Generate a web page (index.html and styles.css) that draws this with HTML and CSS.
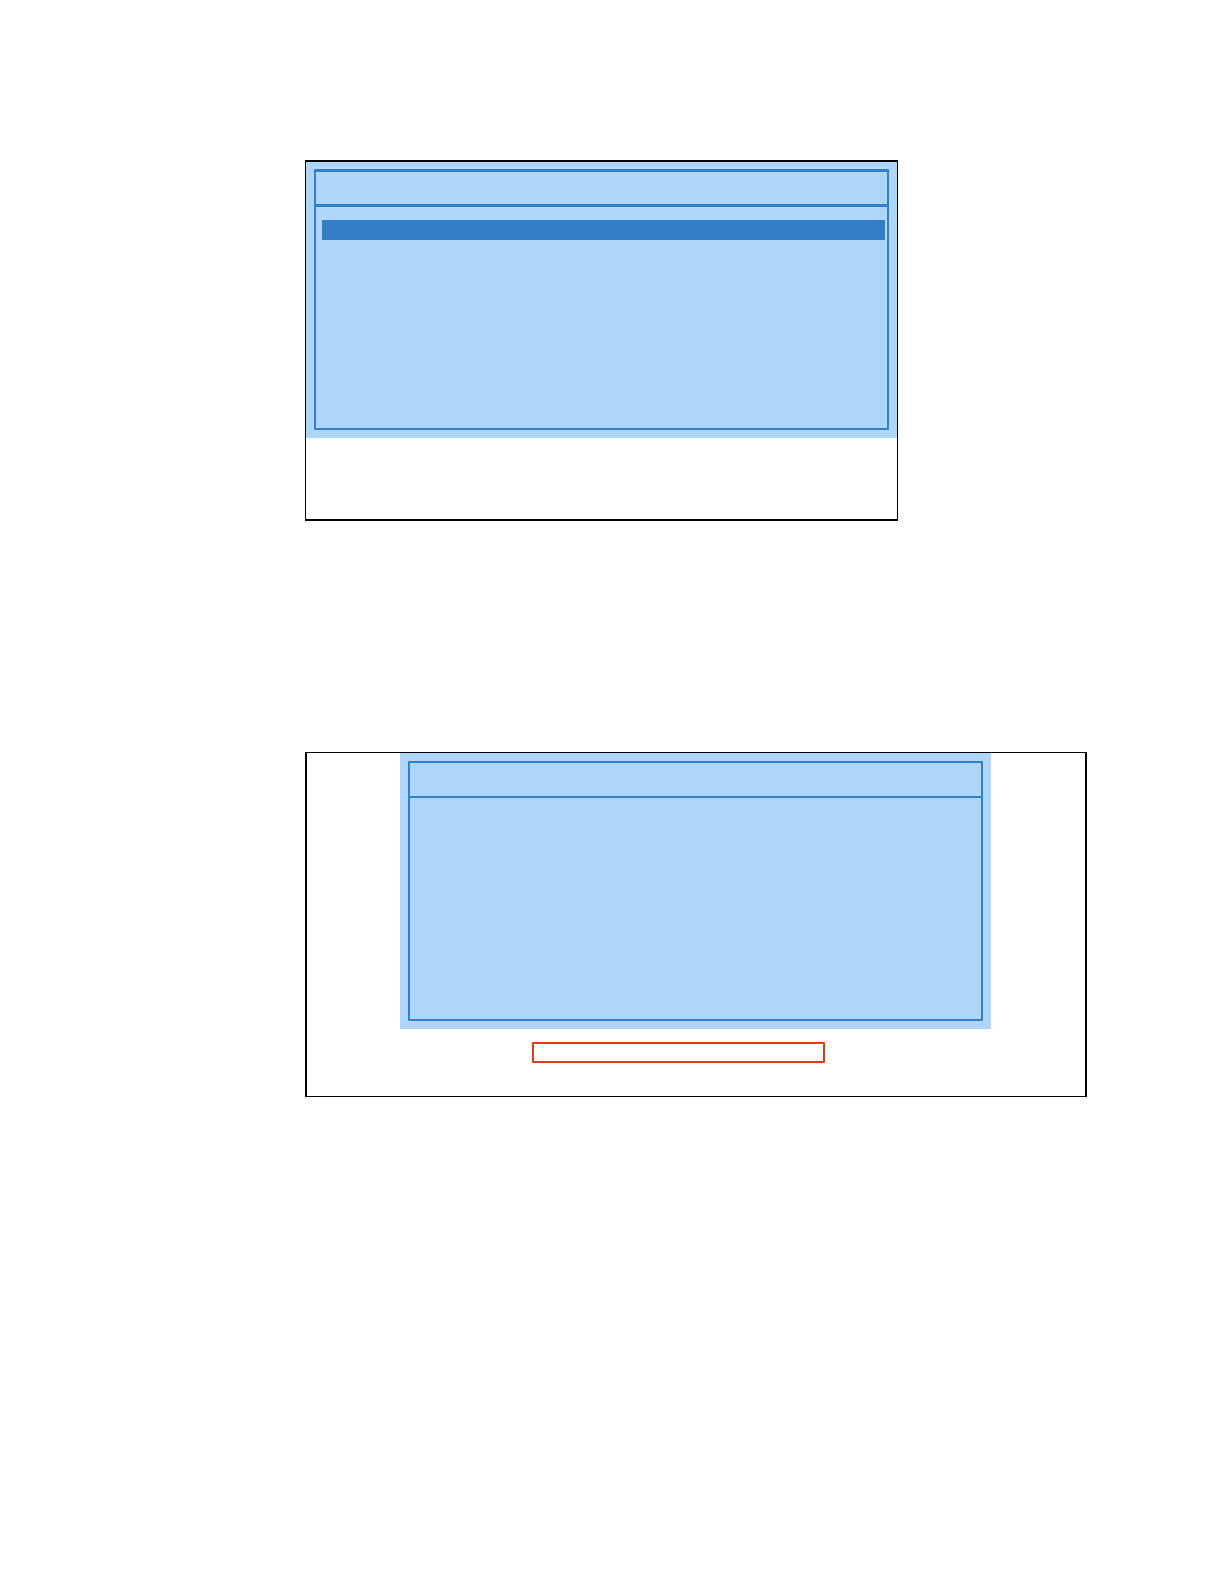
FILE: index.html
```html
<!DOCTYPE html>
<html lang="en">

<head>
  <meta charset="UTF-8">
  <meta name="viewport" content="width=device-width, initial-scale=1.0">
  <title>Screens</title>
  <link rel="stylesheet" href="styles.css">
</head>

<body>
  <main class="page">
    <section class="screen screen-menu">
      <div class="panel">
        <div class="window">
          <div class="window-title"></div>
          <div class="window-body">
            <div class="selected-row"></div>
          </div>
        </div>
      </div>
    </section>

    <section class="screen screen-status">
      <div class="panel">
        <div class="window">
          <div class="window-title"></div>
          <div class="window-body"></div>
        </div>
      </div>
      <div class="highlight"></div>
    </section>
  </main>
</body>

</html>
```

FILE: styles.css
```css
* {
  box-sizing: border-box;
}

body {
  margin: 0;
  background: #fff;
  font-family: "Liberation Sans", sans-serif;
}

.page {
  display: flex;
  flex-direction: column;
  gap: 231px;
  padding: 160px 137px 160px 305px;
}

.screen {
  border: 1px solid #000;
}

.screen-menu {
  width: 100%;
  max-width: 593px;
  padding-bottom: 81px;
  border-width: 2px 1px;
}

.screen-status {
  padding: 0 93px 33px;
  border-width: 1px 2px;
}

.panel {
  max-width: 591px;
  padding: 8px;
  background: #aed5fa;
}

.screen-menu .panel {
  padding-top: 7px;
}

.window {
  border: 2px solid #357fc5;
  border-radius: 1px;
}

.window-title {
  height: 35px;
  border-bottom: 2px solid #357fc5;
}

.window-body {
  min-height: 221px;
  padding: 13px 2px 0 6px;
}

/* menu window has heavier horizontal lines */
.screen-menu .window {
  border-top-width: 3px;
}

.screen-menu .window-title {
  border-bottom-width: 3px;
}

.selected-row {
  height: 20px;
  background: #337fc6;
}

.highlight {
  max-width: 293px;
  height: 21px;
  margin: 13px 0 0 132px;
  border: 2px solid #da3d16;
  border-radius: 1px;
}
```
